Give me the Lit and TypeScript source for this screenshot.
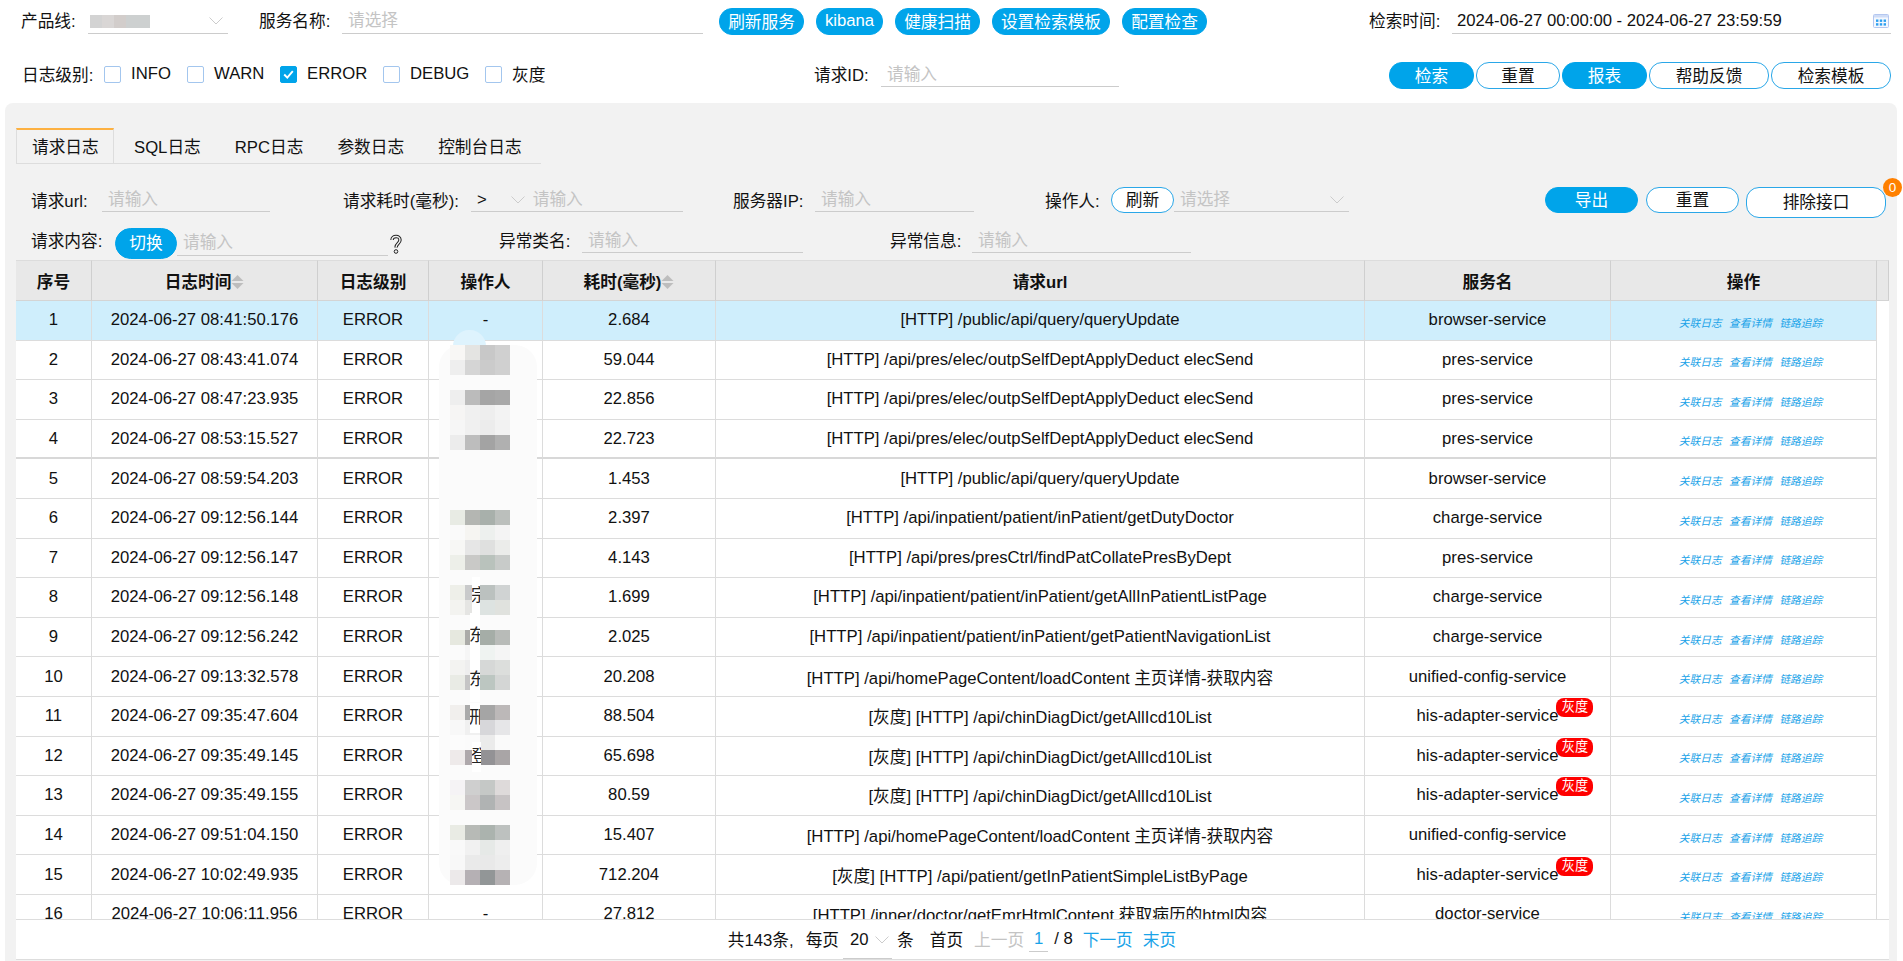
import { LitElement, html, css, svg } from "lit";
import { customElement } from "lit/decorators.js";

const chev = html`<svg class="chev" viewBox="0 0 14 8"><polyline points="0.5,0.5 7,7 13.5,0.5" fill="none" stroke="#ccc" stroke-width="1"/></svg>`;

type Row = [string, string, string, string, string, boolean?];
const A = "[HTTP] /api/pres/elec/outpSelfDeptApplyDeduct elecSend";
const Q = "[HTTP] /public/api/query/queryUpdate";
const H = "[HTTP] /api/homePageContent/loadContent 主页详情-获取内容";
const G = "[灰度] [HTTP] /api/chinDiagDict/getAllIcd10List";
const P = "[HTTP] /api/inpatient/patient/inPatient/";
const rows: Row[] = [
  ["08:41:50.176", "-", "2.684", Q, "browser-service"],
  ["08:43:41.074", "", "59.044", A, "pres-service"],
  ["08:47:23.935", "", "22.856", A, "pres-service"],
  ["08:53:15.527", "", "22.723", A, "pres-service"],
  ["08:59:54.203", "", "1.453", Q, "browser-service"],
  ["09:12:56.144", "", "2.397", P + "getDutyDoctor", "charge-service"],
  ["09:12:56.147", "", "4.143", "[HTTP] /api/pres/presCtrl/findPatCollatePresByDept", "pres-service"],
  ["09:12:56.148", "", "1.699", P + "getAllInPatientListPage", "charge-service"],
  ["09:12:56.242", "", "2.025", P + "getPatientNavigationList", "charge-service"],
  ["09:13:32.578", "", "20.208", H, "unified-config-service"],
  ["09:35:47.604", "", "88.504", G, "his-adapter-service", true],
  ["09:35:49.145", "", "65.698", G, "his-adapter-service", true],
  ["09:35:49.155", "", "80.59", G, "his-adapter-service", true],
  ["09:51:04.150", "", "15.407", H, "unified-config-service"],
  ["10:02:49.935", "", "712.204", "[灰度] [HTTP] /api/patient/getInPatientSimpleListByPage", "his-adapter-service", true],
  ["10:06:11.956", "-", "27.812", "[HTTP] /inner/doctor/getEmrHtmlContent 获取病历的html内容", "doctor-service"],
];

const W = "#fbfbfb";
const mosaic: string[][] = [
  ["#f8f7f5", "#e4e4e2", "#c8c8c8", "#d0d0d0"],
  ["#eeeeee", "#d5d5d5", "#cbcbcb", "#d0d0d0"],
  [W, W, W, W],
  ["#eeeeee", "#bbbbbb", "#a5a5a5", "#a8a8a8"],
  ["#f6f5f4", "#f0f0f0", "#eeeeee", "#f3f3f3"],
  ["#f6f6f6", "#f0f0f0", "#ececec", "#f2f2f2"],
  ["#ececec", "#bdbdbd", "#a3a3a3", "#b0b0b0"],
  [W, W, W, W],
  [W, W, W, W],
  [W, W, W, W],
  [W, W, W, W],
  ["#e8ebe4", "#b4b6b2", "#a8b0ab", "#bbbfbc"],
  ["#fafafa", "#f6f5f2", "#edf0ee", "#f4f4f4"],
  ["#f7f7f5", "#e6e6e6", "#dfe0df", "#ebecea"],
  ["#edefe9", "#c9c9c7", "#b9c2bc", "#c8cbc9"],
  [W, W, W, W],
  ["#eeefe9", "#c9cacb", "#bbc1bf", "#d0d3d3"],
  ["#f3f3f0", "#e5e5e3", "#dde3e1", "#e0e2de"],
  [W, W, W, W],
  ["#e6e8df", "#ababa8", "#a5ada7", "#b8bbb8"],
  ["#fbfbfb", "#f6f6f6", "#eff3f1", "#f5f5f5"],
  ["#f3f3f1", "#eeeeee", "#d6d8d7", "#dcdedc"],
  ["#e9ebe5", "#c5c5c5", "#bcc6c1", "#d4d6d5"],
  [W, W, W, W],
  ["#f1efed", "#aaaaaa", "#a5a5a5", "#bcb8b8"],
  ["#f8f8f8", "#f0f0f0", "#d7d7da", "#e6e6e8"],
  ["#fcfcfc", "#fbfbfb", "#ebebeb", "#fafafa"],
  ["#eeeaea", "#aea8ab", "#939295", "#a9a5a6"],
  [W, W, W, W],
  ["#f5f3f5", "#cfcfcf", "#c5c8c6", "#dedada"],
  ["#f6f6f3", "#cbc7c8", "#b0b3b3", "#c7c3c4"],
  [W, W, W, W],
  ["#e9ebe4", "#b7bab6", "#abb3ae", "#bdc1bf"],
  ["#f9f9f9", "#f1f1f1", "#e6e9e7", "#efefef"],
  ["#f8f8f8", "#eaeaea", "#e9e9e9", "#ededed"],
  ["#ece9ea", "#b5b0b4", "#929697", "#b6b2b4"],
];
// name fragments that show through the retouching: [left, top, width, height, glyph]
const frags: [number, number, number, number, string][] = [
  [33, 232, 8, 38, "宗"],
  [31, 268, 10, 45, "东"],
  [31, 312, 10, 45, "东"],
  [31, 358, 10, 30, "邢"],
  [33, 397, 9, 30, "登"],
];

const sortIcon = svg`<svg class="sort" viewBox="0 0 13 16"><polygon points="6.5,1 12.5,7 0.5,7" fill="#bdbdbd"/><polygon points="0.5,9 12.5,9 6.5,15" fill="#bdbdbd"/></svg>`;

@customElement("app-root")
export class AppRoot extends LitElement {
  static styles = css`
    :host {
      display: block;
      width: 1903px;
      height: 961px;
      overflow: hidden;
      background: #fff;
      color: #111;
      font: 16.7px "Liberation Sans", "Noto Sans CJK SC", sans-serif;
    }
    .top, .second, .f1, .f2 { display: grid; align-items: start; white-space: nowrap; }
    .top {
      padding: 8px 0 0 21px;
      grid-template-columns: 67px 140px 31px 83px 361px 16px 488px 162px 83px 439px;
    }
    .second {
      padding: 27px 0 0 22px;
      grid-template-columns: 82px 83px 93px 103px 102px 100px 229px 67px 238px 270px 502px;
    }
    .lab { height: 26px; line-height: 26px; }
    .top .lab { line-height: 27px; }
    .inp {
      height: 26px; line-height: 24px; box-sizing: border-box;
      border-bottom: 1px solid #ccc; padding-left: 6px;
      color: #c4c4c4; position: relative; display: flex; align-items: center;
    }
    .top .inp { padding-top: 1px; }
    .top .inp.val { padding-top: 0; padding-left: 5px; }
    .second .inp { height: 25px; padding-top: 1px; }
    .second .lab { line-height: 27px; }
    .inp.val { color: #111; }
    .chev { width: 14px; height: 8px; position: absolute; right: 5px; top: 9px; }
    .blur {
      width: 60px; height: 13px; margin-top: 0; margin-left: -4px;
      background: linear-gradient(90deg, #d3d3d3 0 20%, #d9d6d5 20% 40%, #d2cdcb 40% 60%, #cdd0d0 60% 100%);
      filter: blur(0.5px);
    }
    .cal { position: absolute; right: 2px; top: 6px; width: 16px; height: 14px; }
    .btns { display: flex; }
    .pill {
      display: flex; align-items: center; justify-content: center;
      height: 27px; box-sizing: border-box; border-radius: 13px;
      padding-bottom: 2px;
      border: 1px solid #2aa7e8; background: #fff; color: #111; flex: none;
    }
    .pill.on { background: #00a4ea; border-color: #00a4ea; color: #fff; }
    .top .btns { gap: 12px; }
    .top .b1 { width: 85px; } .top .b2 { width: 67px; } .top .b3 { width: 85px; }
    .top .b4 { width: 118px; }
    .second .btns { gap: 2px; }
    .second .b1 { width: 85px; } .second .b2 { width: 84px; } .second .b3 { width: 85px; }
    .second .b4 { width: 120px; } .second .b5 { width: 120px; }
    .check { display: flex; align-items: center; gap: 10px; height: 24px; }
    .box {
      width: 17px; height: 17px; box-sizing: border-box; border-radius: 2px;
      border: 1px solid #a3c6ee; background: #fff; flex: none; display: flex; align-items: center; justify-content: center;
    }
    .box.on { background: #00a4ea; border-color: #00a4ea; }
    .box svg { width: 13px; height: 13px; }

    .panel {
      margin: 14px 6px 0 5px;
      height: 858px; box-sizing: border-box;
      padding: 25px 8px 0 11px;
      background: #f2f2f2;
      border-radius: 8px 8px 0 0;
    }
    .tabs { display: flex; width: 525px; height: 36px; box-sizing: border-box; border-bottom: 1px solid #ddd; }
    .tab { padding: 3px 17px 0; line-height: 33px; height: 35px; box-sizing: border-box; }
    .tab.on {
      width: 98px; padding: 1px 0 0 15px; line-height: 34px;
      border-top: 2px solid #fdb142; border-left: 1px solid #ddd; border-right: 1px solid #ddd;
      box-sizing: border-box;
    }
    .tab.on + .tab { padding-left: 20px; }
    .f1 {
      padding: 23px 0 0 15px; height: 30px; box-sizing: content-box;
      grid-template-columns: 71px 168px 73px 128px 212px 50px 82px 159px 71px 66px 63px 175px 196px 93px 8px 93px 7px 140px;
    }
    .f1 .inp { height: 25px; padding-top: 2px; }
    .f1 .lab { height: 26px; line-height: 29px; }
    .f1 .pill { height: 26px; padding-bottom: 3px; }
    .f1 .inp .gt { color: #111; margin-right: 46px; }
    .f1 .cellbtn { position: relative; }
    .f1 .tall { width: 140px; height: 31px; padding-bottom: 4px; }
    .count {
      position: absolute; right: -16px; top: -9px; width: 19px; height: 19px; border-radius: 50%;
      background: #ff8000; color: #fff; font-size: 13.5px; display: flex; align-items: center; justify-content: center;
    }
    .f2 {
      padding: 11px 0 0 15px; height: 32px;
      grid-template-columns: 84px 62px 211px 2px 16px 93px 83px 221px 87px 82px 219px;
    }
    .f2 .lab { height: 28px; line-height: 28px; }
    .f2 .inp { height: 25px; line-height: 27px; padding-top: 1px; }
    .f2 .inp.big { height: 28px; padding-top: 1px; line-height: 29px; }
    .f2 .pill { height: 31px; border-radius: 16px; padding-bottom: 3px; }
    .qm { width: 12px; height: 20px; margin-top: 6px; margin-left: 0; }

    .tw { position: relative; height: 659px; width: 1873px; overflow: hidden; background: #fff; }
    table { width: 1873px; table-layout: fixed; border-collapse: separate; border-spacing: 0; }
    th, td {
      box-sizing: border-box; text-align: center; padding: 0;
      border-right: 1px solid #dcdcdc; border-bottom: 1px solid #dcdcdc; white-space: nowrap; font-weight: normal;
    }
    th {
      height: 41px; background: #e8e8e8; font-weight: bold;
      border-right-color: #cfcfcf; border-top: 1px solid #dcdcdc; border-bottom-color: #d4d4d4;
    }
    td { height: 39.6px; }
    td.fill { border: 0; background: #fff; }
    tr.hl td:not(.fill) { background: #cfeefc; }
    tr.thick td:not(.fill) { border-bottom: 2px solid #d8d8d8; }
    .sort { width: 13px; height: 16px; vertical-align: -2px; }
    .svc { position: relative; display: inline-block; line-height: 19px; }
    .gray {
      position: absolute; left: 100%; margin-left: -2px; top: -8px;
      width: 37px; height: 19px; border-radius: 8px; background: #ff0000; color: #fff;
      font-size: 13.2px; line-height: 18px; text-align: center;
    }
    .ops { display: flex; justify-content: center; gap: 7.5px; padding-top: 4px; padding-left: 14px; color: #1aa3e8; font-size: 10.7px; font-style: italic; }
    .smudge {
      position: absolute; left: 423px; top: 85px; width: 98px; height: 540px; padding-left: 11px; box-sizing: border-box;
      background: #fbfbfb; border-radius: 22px;
      display: grid; grid-template-columns: repeat(4, 15px); grid-auto-rows: 15px;
    }
    .smudge i { display: block; }
    .frag { position: absolute; background: #fff; overflow: hidden; text-indent: -1px; color: #222; }
    .dome { position: absolute; left: 437px; top: 70px; width: 33px; height: 16px; background: #def3fd; border-radius: 16px 16px 0 0; }

    .pager {
      height: 41px; box-sizing: border-box; width: 1873px;
      background: #fff; border-top: 1px solid #ddd; border-bottom: 1px solid #ddd;
      display: flex; align-items: center; justify-content: center; white-space: nowrap;
      padding: 0 1px 2px 0;
    }
    .pager .t1 { margin-right: 12px; }
    .pager .sel {
      position: relative; width: 49px; height: 38px; line-height: 37px; box-sizing: border-box; margin: 2px 5px 0 4px;
      padding-left: 7px; border-bottom: 1px solid #ccc;
    }
    .pager .sel .chev { top: 15px; right: 3px; }
    .pager .first { margin: 0 11px 0 16px; }
    .pager .dis { color: #c4c4c4; }
    .pager .cur { width: 19px; height: 25px; line-height: 24px; box-sizing: border-box; text-align: center; border-bottom: 1px solid #ccc; color: #1aa3e8; margin: 1px 6px 0 5px; }
    .pager .lk { color: #1aa3e8; }
    .pager .nx { margin: 0 10px 0 10px; }
  `;

  render() {
    return html`
      <div class="top">
        <span class="lab">产品线:</span>
        <div class="inp"><div class="blur"></div>${chev}</div>
        <i></i>
        <span class="lab">服务名称:</span>
        <div class="inp">请选择</div>
        <i></i>
        <div class="btns">
          <span class="pill on b1">刷新服务</span>
          <span class="pill on b2">kibana</span>
          <span class="pill on b3">健康扫描</span>
          <span class="pill on b4">设置检索模板</span>
          <span class="pill on b1">配置检查</span>
        </div>
        <i></i>
        <span class="lab">检索时间:</span>
        <div class="inp val">2024-06-27 00:00:00 - 2024-06-27 23:59:59
          <svg class="cal" viewBox="0 0 16 14">
            <rect x="0.5" y="0.5" width="15" height="13" rx="1" fill="#f4f8fe" stroke="#b4c7f0"/>
            <rect x="1" y="1" width="14" height="2.5" fill="#cfdcf6"/>
            <g fill="#2c9ff0"><rect x="3" y="5.5" width="2.4" height="2.4"/><rect x="6.8" y="5.5" width="2.4" height="2.4"/><rect x="10.6" y="5.5" width="2.4" height="2.4"/><rect x="3" y="9.2" width="2.4" height="2.4"/><rect x="6.8" y="9.2" width="2.4" height="2.4"/><rect x="10.6" y="9.2" width="2.4" height="2.4"/></g>
          </svg>
        </div>
      </div>

      <div class="second">
        <span class="lab">日志级别:</span>
        ${["INFO", "WARN", "ERROR", "DEBUG", "灰度"].map(
          (t) => html`<label class="check"><span class="box ${t === "ERROR" ? "on" : ""}">${t === "ERROR"
            ? html`<svg viewBox="0 0 13 13"><polyline points="2.2,6.5 5.3,9.6 10.8,3.2" fill="none" stroke="#fff" stroke-width="1.9"/></svg>`
            : ""}</span>${t}</label>`
        )}
        <i></i>
        <span class="lab">请求ID:</span>
        <div class="inp">请输入</div>
        <i></i>
        <div class="btns">
          <span class="pill on b1">检索</span>
          <span class="pill b2">重置</span>
          <span class="pill on b3">报表</span>
          <span class="pill b4">帮助反馈</span>
          <span class="pill b5">检索模板</span>
        </div>
      </div>

      <div class="panel">
        <div class="tabs">
          <span class="tab on">请求日志</span>
          <span class="tab">SQL日志</span>
          <span class="tab">RPC日志</span>
          <span class="tab">参数日志</span>
          <span class="tab">控制台日志</span>
        </div>

        <div class="f1">
          <span class="lab">请求url:</span>
          <div class="inp">请输入</div>
          <i></i>
          <span class="lab">请求耗时(毫秒):</span>
          <div class="inp"><span class="gt">&gt;</span>请输入<svg class="chev" style="right:158px" viewBox="0 0 14 8"><polyline points="0.5,0.5 7,7 13.5,0.5" fill="none" stroke="#ccc"/></svg></div>
          <i></i>
          <span class="lab">服务器IP:</span>
          <div class="inp">请输入</div>
          <i></i>
          <span class="lab">操作人:</span>
          <span class="pill">刷新</span>
          <div class="inp">请选择${chev}</div>
          <i></i>
          <span class="pill on">导出</span>
          <i></i>
          <span class="pill">重置</span>
          <i></i>
          <div class="cellbtn"><span class="pill tall">排除接口</span><span class="count">0</span></div>
        </div>

        <div class="f2">
          <span class="lab">请求内容:</span>
          <span class="pill on">切换</span>
          <div class="inp big">请输入</div>
          <i></i>
          <svg class="qm" viewBox="0 0 12 20">
            <path d="M2 6 C2 1.5 10 1 10 6 C10 9.5 6 9.5 6 13.5" fill="none" stroke="#222" stroke-width="3.4"/>
            <path d="M2 6 C2 1.5 10 1 10 6 C10 9.5 6 9.5 6 13.5" fill="none" stroke="#f2f2f2" stroke-width="1.4"/>
            <circle cx="6" cy="17.5" r="1.8" fill="#f2f2f2" stroke="#222" stroke-width="1"/>
          </svg>
          <i></i>
          <span class="lab">异常类名:</span>
          <div class="inp">请输入</div>
          <i></i>
          <span class="lab">异常信息:</span>
          <div class="inp">请输入</div>
        </div>

        <div class="tw">
          <table>
            <colgroup>
              <col style="width:76px" /><col style="width:226px" /><col style="width:111px" /><col style="width:114px" />
              <col style="width:173px" /><col style="width:649px" /><col style="width:246px" /><col style="width:266px" /><col />
            </colgroup>
            <thead>
              <tr>
                <th>序号</th><th>日志时间${sortIcon}</th><th>日志级别</th><th>操作人</th><th>耗时(毫秒)${sortIcon}</th>
                <th>请求url</th><th>服务名</th><th>操作</th><th></th>
              </tr>
            </thead>
            <tbody>
              ${rows.map(
                (r, i) => html`<tr class="${i === 0 ? "hl" : ""} ${i === 3 ? "thick" : ""}">
                  <td>${i + 1}</td>
                  <td>2024-06-27 ${r[0]}</td>
                  <td>ERROR</td>
                  <td>${r[1]}</td>
                  <td>${r[2]}</td>
                  <td>${r[3]}</td>
                  <td><span class="svc">${r[4]}${r[5] ? html`<span class="gray">灰度</span>` : ""}</span></td>
                  <td><div class="ops"><span>关联日志</span><span>查看详情</span><span>链路追踪</span></div></td>
                  <td class="fill"></td>
                </tr>`
              )}
            </tbody>
          </table>
          <div class="dome"></div>
          <div class="smudge">
            ${mosaic.flat().map((c) => html`<i style="background:${c}"></i>`)}
            ${frags.map(
              (f) => html`<span class="frag" style="left:${f[0]}px;top:${f[1]}px;width:${f[2]}px;height:${f[3]}px;line-height:${f[3]}px">${f[4]}</span>`
            )}
          </div>
        </div>

        <div class="pager">
          <span class="t1">共143条,</span>
          <span>每页</span>
          <span class="sel">20${chev}</span>
          <span>条</span>
          <span class="first">首页</span>
          <span class="dis">上一页</span>
          <span class="cur">1</span>
          <span>/ 8</span>
          <span class="lk nx">下一页</span>
          <span class="lk">末页</span>
        </div>
      </div>
    `;
  }
}
